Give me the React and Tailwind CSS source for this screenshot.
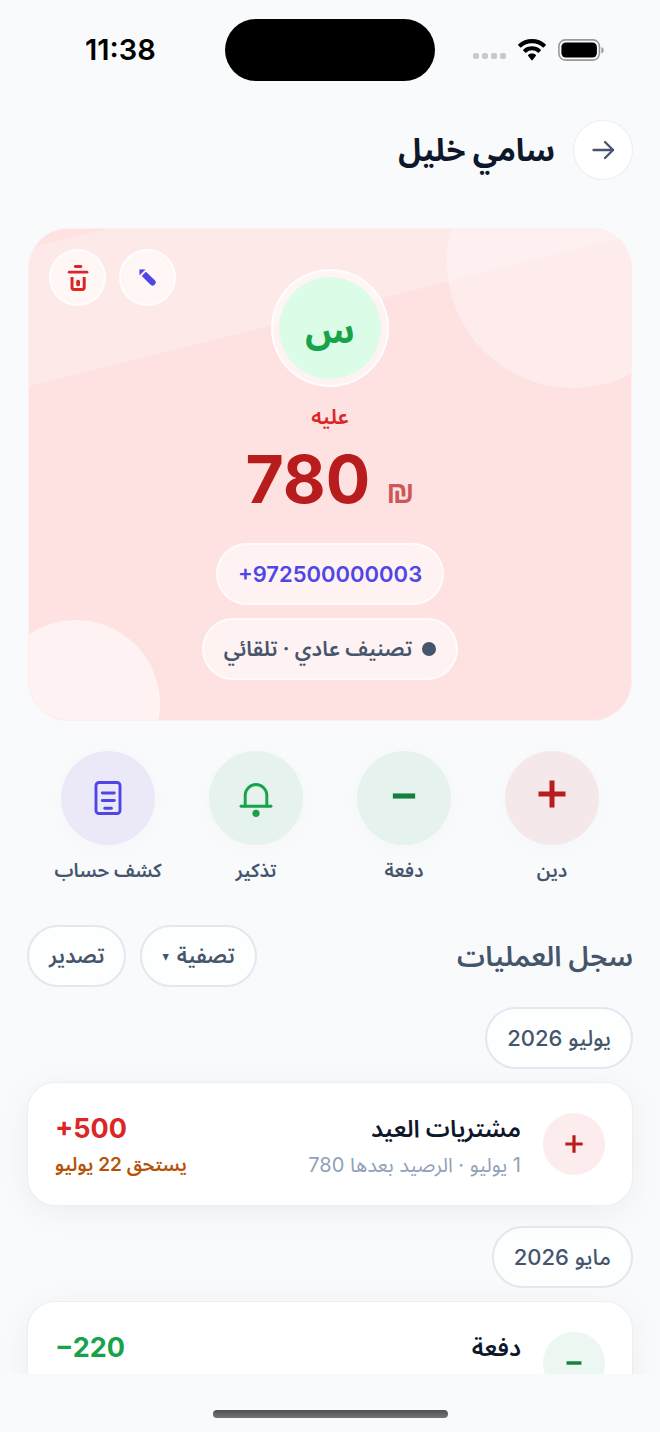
const WifiIcon = ({ className }) => {
  return (
    <svg viewBox="0 0 28 22" fill="none" className={className} aria-hidden="true">
      <path
        d="M14 0C8.8 0 4 1.900.4 5.200a.9.900 0 0 0 0 1.300l1.700 1.700c.35.350.9.350 1.250 0A15.500 15.500 0 0 1 14 4.200a15.500 15.500 0 0 1 10.650 4c.35.350.9.350 1.250 0l1.700-1.700a.9.900 0 0 0 0-1.300C24 1.900 19.200 0 14 0Z"
        fill="currentColor"
      />
      <path
        d="M14 7.200c-3.300 0-6.300 1.200-8.600 3.200a.9.900 0 0 0 0 1.350l1.700 1.700c.34.340.88.350 1.240.040A8.600 8.600 0 0 1 14 11.300c2.200 0 4.100.8 5.660 2.190.36.310.9.300 1.240-.04l1.700-1.700a.9.900 0 0 0 0-1.350A13 13 0 0 0 14 7.200Z"
        fill="currentColor"
      />
      <path
        d="M14 14.500c-1.400 0-2.700.5-3.700 1.300a.9.900 0 0 0-.05 1.300l3.100 3.900c.36.400.94.400 1.300 0l3.100-3.900a.9.900 0 0 0-.05-1.300c-1-.8-2.300-1.300-3.700-1.300Z"
        fill="currentColor"
      />
    </svg>
  );
};

const BatteryIcon = ({ className }) => {
  return (
    <svg viewBox="0 0 46 22" fill="none" className={className} aria-hidden="true">
      <rect x="0.9" y="0.9" width="40.500" height="20.200" rx="6.500" stroke="#98999b" strokeWidth="1.600" />
      <rect x="3.400" y="3.400" width="35.500" height="15.200" rx="4.500" fill="#000" />
      <path d="M43.400 8v6.500c1.500-.5 2.200-1.800 2.200-3.250S44.900 8.500 43.400 8Z" fill="#98999b" />
    </svg>
  );
};

const ArrowIcon = ({ className }) => {
  return (
    <svg
      viewBox="0 0 24 24"
      fill="none"
      stroke="currentColor"
      strokeWidth="2.300"
      strokeLinecap="round"
      strokeLinejoin="round"
      className={className}
      aria-hidden="true">
      <path d="M2.500 12h19.500" />
      <path d="m14 4 8 8-8 8" />
    </svg>
  );
};

const TrashIcon = ({ className }) => {
  return (
    <svg viewBox="0 0 24 28" fill="none" stroke="currentColor" strokeLinecap="round" className={className} aria-hidden="true">
      <path d="M9.300 2.500h5.600" strokeWidth="2.800" />
      <path d="M3.200 8.200h17.800" strokeWidth="2.800" />
      <path
        d="M6 13v10.300c0 1.500.9 2.300 2 2.300h8.200c1.100 0 2-.8 2-2.300V13"
        strokeWidth="3"
        strokeLinecap="butt"
      />
      <path d="M12.100 17.600v2.800" strokeWidth="3.800" />
    </svg>
  );
};

const PencilIcon = ({ className }) => {
  return (
    <svg viewBox="0 0 18 18" fill="currentColor" className={className} aria-hidden="true">
      <path d="M.8.800h5.400L.8 6.200Z" strokeLinejoin="round" stroke="currentColor" strokeWidth=".6" />
      <path d="M3.200 7.300 7.300 3.200 16.500 12a3 3 0 0 1-4.300 4.300Z" stroke="currentColor" strokeWidth=".6" strokeLinejoin="round" />
    </svg>
  );
};

const BellIcon = ({ className }) => {
  return (
    <svg
      viewBox="0 0 34 34"
      fill="none"
      stroke="currentColor"
      strokeWidth="2.900"
      strokeLinecap="round"
      className={className}
      aria-hidden="true">
      <path d="M6.200 23V12.300a10.800 10.800 0 0 1 21.600 0V23" />
      <path d="M2 23.200h30" />
      <circle cx="17" cy="30.300" r="3.600" fill="currentColor" stroke="none" />
    </svg>
  );
};

const StatementIcon = ({ className }) => {
  return (
    <svg
      viewBox="0 0 28 34"
      fill="none"
      stroke="currentColor"
      strokeWidth="2.900"
      strokeLinecap="round"
      className={className}
      aria-hidden="true">
      <rect x="2" y="1.500" width="24" height="31" rx="3" />
      <path d="M8.300 12h12" />
      <path d="M8.300 19.500h12" />
      <path d="M10.800 27.300h6.600" />
    </svg>
  );
};

const PlusIcon = ({ className }) => {
  return (
    <svg viewBox="0 0 28 28" stroke="currentColor" strokeWidth="5" className={className} aria-hidden="true">
      <path d="M.5 14h27M14 .5v27" />
    </svg>
  );
};

const MinusIcon = ({ className }) => {
  return (
    <svg viewBox="0 0 28 28" stroke="currentColor" strokeWidth="6" className={className} aria-hidden="true">
      <path d="M1 14h26" />
    </svg>
  );
};

const actions = [
  { label: "دين", Icon: PlusIcon, icon: "mb-2 size-7 text-[#b91c1c]", circle: "bg-[#f4e8ea]" },
  { label: "دفعة", Icon: MinusIcon, icon: "mb-1 size-6 text-[#15803d]", circle: "bg-[#e6f2ed]" },
  { label: "تذكير", Icon: BellIcon, icon: "mt-1 size-[34px] text-[#16a34a]", circle: "bg-[#e6f2ed]" },
  { label: "كشف حساب", Icon: StatementIcon, icon: "h-[34px] w-7 text-[#4f46e5]", circle: "bg-[#ebe9f8]" },
];

const months = [
  {
    title: "يوليو 2026",
    entry: {
      kind: "debt",
      title: "مشتريات العيد",
      detail: "1 يوليو · الرصيد بعدها 780",
      amount: "+500",
      due: "يستحق 22 يوليو",
    },
  },
  {
    title: "مايو 2026",
    entry: {
      kind: "payment",
      title: "دفعة",
      amount: "−220",
    },
  },
];

const StatusBar = () => {
  return (
    <div dir="ltr" className="grid h-[100px] shrink-0 grid-cols-[1fr_210px_1fr] items-center text-black">
      <div className="pl-4 text-center text-[29px] font-semibold">11:38</div>
      <div className="h-[62px] rounded-full bg-black" />
      <div className="flex items-center justify-center gap-3 pr-[18px]">
        <div className="mt-3 flex gap-[3px]">
          <i className="size-[6px] rounded-xs bg-[#c8c9cb]" />
          <i className="size-[6px] rounded-xs bg-[#c8c9cb]" />
          <i className="size-[6px] rounded-xs bg-[#c8c9cb]" />
          <i className="size-[6px] rounded-xs bg-[#c8c9cb]" />
        </div>
        <WifiIcon className="h-[22px] w-7" />
        <BatteryIcon className="h-[22px] w-[46px]" />
      </div>
    </div>
  );
};

const BalanceCard = () => {
  return (
    <section className="relative mx-7 mt-12 overflow-hidden rounded-[40px] border border-[#fdeeef] bg-[#fee2e2] py-10">
      {/* Decorative shapes */}
      <div className="absolute top-[-54px] left-1/2 h-[134px] w-[150%] -translate-x-1/2 -rotate-14 bg-white/25" />
      <div className="absolute -top-[93px] -right-[68px] size-[252px] rounded-full bg-white/35" />
      <div className="absolute -bottom-[68px] -left-[37px] size-[168px] rounded-full bg-white/55" />

      <div className="absolute top-5 left-5 flex gap-[13px]">
        <button
          type="button"
          aria-label="تعديل"
          className="flex size-[57px] items-center justify-center rounded-full border-2 border-white/70 bg-white/60 text-[#4f46e5]">
          <PencilIcon className="size-[17px]" />
        </button>
        <button
          type="button"
          aria-label="حذف"
          className="flex size-[57px] items-center justify-center rounded-full border-2 border-white/70 bg-white/60 text-[#dc2626]">
          <TrashIcon className="h-7 w-6" />
        </button>
      </div>

      <div className="relative flex flex-col items-center">
        <div className="flex size-[118px] items-center justify-center rounded-full border-2 border-white/80 bg-white/55">
          <div className="flex size-[102px] items-center justify-center rounded-full bg-green-100 pt-1 text-[36px] font-bold text-[#16a34a]">
            س
          </div>
        </div>
        <div className="mt-3 text-[21px] leading-9 font-semibold text-[#dc2626]">عليه</div>
        <div dir="ltr" className="mt-1 flex h-[80px] items-baseline gap-4 leading-[80px] text-[#b91c1c]">
          <span className="text-[66px] font-bold">780</span>
          <span className="font-['Liberation_Sans',sans-serif] text-[32px] font-bold opacity-70">₪</span>
        </div>
        <a
          href="tel:+972500000003"
          dir="ltr"
          className="mt-6 flex h-[62px] items-center rounded-full border-2 border-white/70 bg-white/55 px-5 text-[22px] font-semibold text-[#4f46e5]">
          +972500000003
        </a>
        <div className="mt-[13px] flex h-[62px] items-center gap-[10px] rounded-full border-2 border-white/70 bg-white/55 px-5 text-[21px] font-semibold text-slate-600">
          <span className="size-[14px] rounded-full bg-slate-600" />
          تصنيف عادي · تلقائي
        </div>
      </div>
    </section>
  );
};

const EntryCard = ({ entry }) => {
  const isDebt = entry.kind === "debt";

  return (
    <article className="flex min-h-[124px] items-center gap-[22px] rounded-[28px] border border-slate-200/70 bg-white px-[27px] shadow-[0_6px_32px_rgba(15,23,42,0.05)]">
      <div
        className={`flex size-[62px] shrink-0 items-center justify-center rounded-full ${
          isDebt ? "bg-[#fceced] text-[#b91c1c]" : "bg-[#ebf7f0] text-[#15803d]"
        }`}>
        {isDebt ? <PlusIcon className="size-[18px]" /> : <MinusIcon className="size-4" />}
      </div>
      <div className="min-w-0 flex-1 self-stretch pt-7">
        <h3 className="text-[24px] leading-9 font-semibold text-slate-900">{entry.title}</h3>
        {entry.detail && <p className="text-xl leading-9 text-slate-400">{entry.detail}</p>}
      </div>
      <div className="flex flex-col items-end self-stretch pt-7">
        <span
          dir="ltr"
          className={`text-[27px] leading-9 font-bold ${isDebt ? "text-[#dc2626]" : "text-[#16a34a]"}`}>
          {entry.amount}
        </span>
        {entry.due && <span className="text-[19px] leading-9 font-semibold text-[#b45309]">{entry.due}</span>}
      </div>
    </article>
  );
};

export default function App() {
  return (
    <div
      dir="rtl"
      lang="ar"
      className="flex h-screen flex-col overflow-hidden bg-slate-50 font-['Inter','Noto_Sans_Arabic','DejaVu_Sans_Condensed','DejaVu_Sans',sans-serif]">
      <StatusBar />

      <main className="min-h-0 flex-1 overflow-hidden">
        <header className="flex items-center gap-[18px] px-[27px] pt-5">
          <button
            type="button"
            aria-label="رجوع"
            className="flex size-[60px] items-center justify-center rounded-full border border-slate-200/70 bg-white text-slate-600">
            <ArrowIcon className="size-6" />
          </button>
          <h1 className="text-[31px] leading-[60px] font-bold text-slate-900">سامي خليل</h1>
        </header>

        <BalanceCard />

        <nav className="mt-[30px] grid grid-cols-4 px-[34px]">
          {actions.map(({ label, Icon, icon, circle }) => (
            <button key={label} type="button" className="flex flex-col items-center gap-2">
              <span
                className={`flex size-[94px] items-center justify-center rounded-full shadow-[0_4px_20px_rgba(15,23,42,0.02)] ${circle}`}>
                <Icon className={icon} />
              </span>
              <span className="text-[19px] leading-9 font-semibold text-slate-600">{label}</span>
            </button>
          ))}
        </nav>

        <section className="mt-9 px-[27px]">
          <div className="flex items-center gap-[14px]">
            <h2 className="flex-1 text-[28px] font-semibold text-slate-600">سجل العمليات</h2>
            <button
              type="button"
              className="flex h-[62px] items-center gap-2 rounded-full border-2 border-slate-200 bg-white/70 px-5 text-[21px] font-semibold text-slate-600">
              تصفية
              <span className="text-sm">▾</span>
            </button>
            <button
              type="button"
              className="h-[62px] rounded-full border-2 border-slate-200 bg-white/70 px-5 text-[21px] font-semibold text-slate-600">
              تصدير
            </button>
          </div>

          {months.map((month) => (
            <div key={month.title} className="mt-5">
              <div className="flex">
                <h3 className="flex h-[62px] items-center rounded-full border-2 border-slate-200 bg-white/70 px-5 text-[22px] font-medium text-slate-600">
                  {month.title}
                </h3>
              </div>
              <div className="mt-[13px]">
                <EntryCard entry={month.entry} />
              </div>
            </div>
          ))}
        </section>
      </main>

      <footer className="flex h-[58px] shrink-0 items-end justify-center pb-[14px]">
        <div className="h-2 w-[235px] rounded-full bg-linear-to-b from-[#505152] to-[#737475]" />
      </footer>
    </div>
  );
}
